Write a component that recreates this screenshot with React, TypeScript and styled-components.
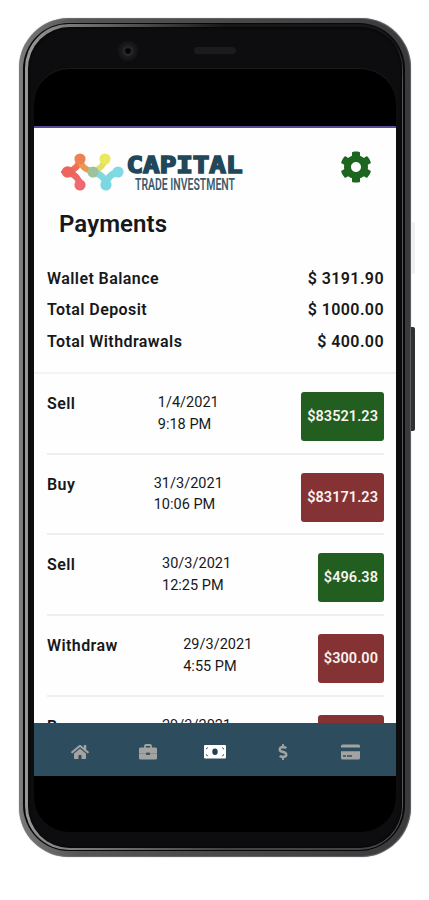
import React from "react";
import styled, { createGlobalStyle } from "styled-components";
import { FaHome, FaDollarSign, FaCog } from "react-icons/fa";

const GlobalStyle = createGlobalStyle`
  * { box-sizing: border-box; }
  body { margin: 0; background: #fff; font-family: Roboto, "Liberation Sans", sans-serif; color: #17181a; }
`;

const Page = styled.main`
  width: 429px;
  height: 900px;
  padding: 18px 0 0 19px;
  overflow: hidden;
`;

const Phone = styled.div`
  position: relative;
  width: 392px;
  height: 839px;
  padding: 5px 6px 6px 4px;
  border-radius: 50px;
  background: linear-gradient(90deg, #838383 0, #777 4px, #555 60px, #3a3a3c 100%);
  box-shadow: inset 0 0 0 1px #77777799, 0 0 1px #777;
`;

const SideButton = styled.i<{ $top: number; $height: number; $color: string }>`
  position: absolute;
  left: 392px;
  top: ${(p) => p.$top}px;
  width: 4px;
  height: ${(p) => p.$height}px;
  border-radius: 0 2px 2px 0;
  background: ${(p) => p.$color};
`;

const Groove = styled.div`
  height: 100%;
  padding: 1px 2px 1px 2px;
  border-radius: 46px;
  background: #08080a;
`;

const Rim = styled.div`
  height: 100%;
  padding: 3px 1px 2px 3px;
  border-radius: 44px;
  background:
    linear-gradient(90deg, #999 0, #8a8a8a 20px, #55555700 200px),
    linear-gradient(180deg, #161618 0, #161618 20px, #58585a 60px, #58585a 770px, #444446 100%);
`;

const Bezel = styled.div`
  height: 100%;
  padding: 42px 7px 16px 6px;
  border-radius: 42px;
  background: #0d0d0f;
  box-shadow: inset 0 0 3px #000;
`;

const Camera = styled.i`
  position: absolute;
  left: 98px;
  top: 21px;
  width: 22px;
  height: 22px;
  border-radius: 50%;
  background: radial-gradient(circle at 50% 54%, #030304 0 2px, #2b2b2d 4px, #1a1a1c 6px, #151517 9px, #0d0d0f 11px);
`;

const Speaker = styled.i`
  position: absolute;
  left: 175px;
  top: 29px;
  width: 42px;
  height: 7px;
  border-radius: 4px;
  background: #1b1b1d;
`;

const Screen = styled.div`
  height: 763px;
  width: 362px;
  padding-top: 57px;
  border-radius: 35px;
  background: #000;
  box-shadow: 0 -1px 0 #1c1a19;
`;

const Content = styled.div`
  display: flex;
  flex-direction: column;
  height: 650px;
  border-top: 2px solid #5a4a9a;
  background: #fefefe;
`;

const Header = styled.header`
  display: flex;
  justify-content: space-between;
  height: 76px;
  padding: 22px 24px 0 27px;
`;

const Title = styled.h1`
  margin: 0;
  padding-left: 25px;
  height: 59px;
  font-size: 24px;
  font-weight: 600;
  line-height: 40px;
  letter-spacing: 0.08px;
`;

const Summary = styled.section`
  height: 111px;
  padding: 0 12px 0 13px;
  border-bottom: 2px solid #f3f3f3;
`;

const SummaryRow = styled.div`
  display: flex;
  justify-content: space-between;
  height: 31.3px;
  font-size: 16px;
  font-weight: 600;
  line-height: 31px;
  letter-spacing: 0.42px;
`;

const List = styled.ul`
  flex: 1;
  min-height: 0;
  margin: 0;
  padding: 0 12px 0 13px;
  overflow: hidden;
  list-style: none;
`;

const Row = styled.li`
  display: flex;
  justify-content: space-between;
  align-items: flex-start;
  height: 80.7px;
  padding-top: 18px;
  border-bottom: 2px solid #efefef;
`;

const Kind = styled.strong`
  margin-top: -1px;
  font-size: 16px;
  font-weight: 600;
  line-height: 25px;
  letter-spacing: 0.42px;
`;

const When = styled.div`
  font-size: 14.5px;
  font-weight: 450;
  line-height: 21.6px;
  letter-spacing: 0.02px;
  white-space: pre-line;
`;

const Amount = styled.div<{ $credit: boolean }>`
  display: flex;
  align-items: center;
  height: 49px;
  padding: 0 6px;
  border-radius: 3px;
  background: ${(p) => (p.$credit ? "#235e21" : "#853234")};
  color: #f7f4ee;
  font-size: 14.5px;
  font-weight: 600;
  letter-spacing: 0.05px;
`;

const TabBar = styled.nav`
  display: grid;
  grid-template-columns: repeat(5, 67.5px);
  place-items: center;
  justify-content: center;
  height: 53px;
  padding-top: 5px;
  background: #2d4d5e;
  color: #a3a3a1;
`;

const Tab = styled.a<{ $active?: boolean }>`
  display: flex;
  color: ${(p) => (p.$active ? "#fff" : "inherit")};
`;

const Logo = () => (
  <svg width="184" height="44" viewBox="61 150 184 44">
    <defs>
      <linearGradient id="warm" x1="0" y1="0" x2="0" y2="1">
        <stop offset="0" stopColor="#ee8052" />
        <stop offset="0.5" stopColor="#ee655c" />
        <stop offset="1" stopColor="#ee6a73" />
      </linearGradient>
    </defs>
    <path d="M80 159Q79 168 68 172Q79 176 80 185" fill="none" stroke="url(#warm)" strokeWidth="6.5" />
    <path d="M80 159Q81 169 92 171" fill="none" stroke="#e99a50" strokeWidth="6" />
    <path d="M105 159Q103 169 93 171" fill="none" stroke="#e3df62" strokeWidth="6" />
    <path d="M93 172Q105 175 106 185Q107 175 118 172" fill="none" stroke="#7fd7e1" strokeWidth="6.5" />
    <circle cx="67.500" cy="172" r="5.8" fill="#ee635d" />
    <circle cx="80" cy="185" r="5.6" fill="#ef6971" />
    <circle cx="80" cy="159" r="5.6" fill="#ee8053" />
    <circle cx="105" cy="159" r="5.6" fill="#e9e95d" />
    <circle cx="93" cy="172" r="5.6" fill="#9fc29a" />
    <circle cx="106" cy="185" r="5.6" fill="#7cd7e1" />
    <circle cx="118" cy="172" r="5.6" fill="#80dae4" />
    <text x="126.500" y="172.600" fontFamily="DejaVu Sans Mono" fontWeight="700" fontSize="23" textLength="116" lengthAdjust="spacingAndGlyphs" fill="#214759" stroke="#214759" strokeWidth="1.6">CAPITAL</text>
    <text x="135" y="190" fontFamily="Roboto" fontWeight="600" fontSize="16" textLength="100" lengthAdjust="spacingAndGlyphs" fill="#3c5c6b">TRADE INVESTMENT</text>
  </svg>
);

const Gear = styled(FaCog)`
  margin-top: 1px;
  width: 32px;
  height: 32px;
  color: #1d661f;
`;

const Briefcase = () => (
  <svg width="18" height="16" viewBox="0 0 18 16">
    <path d="M6 4V2Q6 1 7 1H11Q12 1 12 2V4" fill="none" stroke="#a3a3a1" strokeWidth="1.8" />
    <path d="M1.500 3.500H16.500Q18 3.500 18 5V14Q18 15.500 16.500 15.500H1.500Q0 15.500 0 14V5Q0 3.500 1.500 3.500Z" fill="#a3a3a1" />
    <path d="M0 9.500H18" stroke="#7d898b" strokeWidth="0.8" />
    <rect x="7" y="8.500" width="4" height="2.500" rx=".6" fill="#3c5561" />
  </svg>
);

const BankNote = () => (
  <svg width="22" height="14" viewBox="0 0 22 14">
    <rect width="22" height="13.500" rx="1" fill="#fff" />
    <ellipse cx="11" cy="6.800" rx="2.700" ry="3.200" fill="#23404f" />
    <path d="M2 4Q3.300 3.800 3.500 2.400M2 9.600Q3.300 9.800 3.500 11.200M20 4Q18.700 3.800 18.500 2.400M20 9.600Q18.700 9.800 18.500 11.200" fill="none" stroke="#2d4d5e" strokeWidth="1" />
  </svg>
);

const Card = () => (
  <svg width="19" height="16" viewBox="0 0 19 16">
    <path d="M0 3.500V2Q0 .5 1.500 .5H17.500Q19 .5 19 2V3.500ZM0 7.200H19V14Q19 15.500 17.500 15.500H1.500Q0 15.500 0 14Z" fill="#a3a3a1" />
    <path d="M2 12H5M6 12H11" stroke="#4c626c" strokeWidth="1.800" />
  </svg>
);

const totals = [
  ["Wallet Balance", "$ 3191.90"],
  ["Total Deposit", "$ 1000.00"],
  ["Total Withdrawals", "$ 400.00"],
];

const payments = [
  { kind: "Sell", date: "1/4/2021", time: "9:18 PM", amount: "$83521.23", credit: true },
  { kind: "Buy", date: "31/3/2021", time: "10:06 PM", amount: "$83171.23", credit: false },
  { kind: "Sell", date: "30/3/2021", time: "12:25 PM", amount: "$496.38", credit: true },
  { kind: "Withdraw", date: "29/3/2021", time: "4:55 PM", amount: "$300.00", credit: false },
  { kind: "Buy", date: "29/3/2021", time: "4:52 PM", amount: "$400.00", credit: false },
];

export default function App() {
  return (
    <Page>
      <GlobalStyle />
      <Phone>
        <SideButton $top={204} $height={52} $color="#f0f0f0" />
        <SideButton $top={309} $height={104} $color="#303032" />
        <Groove>
          <Rim>
            <Bezel>
              <Screen>
                <Content>
                  <Header>
                    <Logo />
                    <Gear />
                  </Header>
                  <Title>Payments</Title>
                  <Summary>
                    {totals.map(([label, value]) => (
                      <SummaryRow key={label}>
                        <span>{label}</span>
                        <span>{value}</span>
                      </SummaryRow>
                    ))}
                  </Summary>
                  <List>
                    {payments.map((p) => (
                      <Row key={p.date + p.time}>
                        <Kind>{p.kind}</Kind>
                        <When>{`${p.date}\n${p.time}`}</When>
                        <Amount $credit={p.credit}>{p.amount}</Amount>
                      </Row>
                    ))}
                  </List>
                  <TabBar>
                    <Tab><FaHome size={18} /></Tab>
                    <Tab><Briefcase /></Tab>
                    <Tab $active><BankNote /></Tab>
                    <Tab><FaDollarSign size={16} /></Tab>
                    <Tab><Card /></Tab>
                  </TabBar>
                </Content>
              </Screen>
            </Bezel>
          </Rim>
        </Groove>
        <Camera />
        <Speaker />
      </Phone>
    </Page>
  );
}
